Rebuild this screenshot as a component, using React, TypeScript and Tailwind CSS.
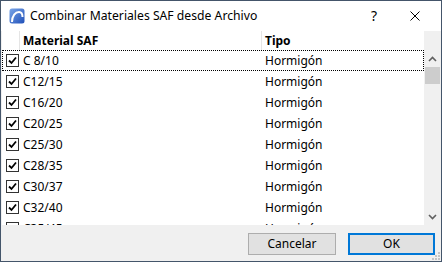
const materiales = ["C 8/10", "C12/15", "C16/20", "C20/25", "C25/30", "C28/35", "C30/37", "C32/40", "C35/45"];

function CheckBox() {
  return (
    <div className="w-[13px] h-[13px] border border-[#333333] bg-white flex items-center justify-center">
      <svg width="9" height="9" viewBox="0 0 9 9">
        <path d="M1 4.5 L3.5 7 L8 1.5" fill="none" stroke="#000" strokeWidth="1.8" />
      </svg>
    </div>
  );
}

function Chevron({ up }: { up?: boolean }) {
  return (
    <svg width="9" height="6" viewBox="0 0 9 6">
      <path d={up ? "M1 5 L4.5 1.5 L8 5" : "M1 1 L4.5 4.5 L8 1"} fill="none" stroke="#606060" strokeWidth="1.6" />
    </svg>
  );
}

export default function App() {
  return (
    <div className="w-[442px] h-[262px] border border-[#44556a] bg-[#f0f0f0] flex flex-col overflow-hidden font-['Segoe_UI','Noto_Sans',sans-serif] text-[12px] text-black">
      {/* title bar */}
      <div className="h-[30px] bg-white flex items-center shrink-0">
        <svg className="ml-[8px]" width="16" height="16" viewBox="0 0 16 16">
          <defs>
            <linearGradient id="ic" x1="0" y1="0" x2="1" y2="1">
              <stop offset="0" stopColor="#7aa6e8" />
              <stop offset="1" stopColor="#1f4fb8" />
            </linearGradient>
          </defs>
          <rect x="0.5" y="0.5" width="15" height="15" rx="2.5" fill="url(#ic)" />
          <path d="M3 14 C3 7.5 6.5 4 10 4 C12.5 4 13.5 6 13.5 9" fill="none" stroke="#fff" strokeWidth="2" />
        </svg>
        <span className="ml-[5px] text-[12.2px]">Combinar Materiales SAF desde Archivo</span>
        <span className="ml-auto mr-[12px] text-[14px] leading-none">?</span>
        <div className="w-[52px] h-full flex items-center justify-center">
          <svg width="10" height="10" viewBox="0 0 10 10">
            <path d="M0.5 0.5 L9.5 9.5 M9.5 0.5 L0.5 9.5" stroke="#000" strokeWidth="1" />
          </svg>
        </div>
      </div>

      {/* list */}
      <div className="h-[194px] flex pl-[1px] shrink-0">
        <div className="flex-1 bg-white overflow-hidden">
          <div className="h-[19px] flex items-center font-bold">
            <div className="w-[18px] h-full border-r border-[#e5e5e5]" />
            <div className="w-[242px] h-full pl-[3px] flex items-center border-r border-[#e5e5e5]">Material SAF</div>
            <div className="pl-[3px]">Tipo</div>
          </div>
          {materiales.map((m, i) => (
            <div
              key={m}
              className={`h-[21px] flex items-center ${i === 0 ? "outline-1 outline-dotted outline-black -outline-offset-1" : ""}`}
            >
              <div className="w-[18px] flex pl-[4px]">
                <CheckBox />
              </div>
              <div className="w-[242px] pl-[3px]">{m}</div>
              <div className="pl-[3px]">Hormigón</div>
            </div>
          ))}
        </div>
        <div className="w-[17px] flex flex-col bg-[#f0f0f0]">
          <div className="h-[19px]" />
          <div className="h-[17px] flex items-center justify-center">
            <Chevron up />
          </div>
          <div className="h-[17px] mx-[1px] bg-[#cdcdcd]" />
          <div className="flex-1" />
          <div className="h-[17px] flex items-center justify-center">
            <Chevron />
          </div>
        </div>
      </div>

      {/* footer */}
      <div className="flex-1 relative flex justify-end items-start pt-[8px] pr-[6px] gap-[12px]">
        <button className="w-[88px] h-[22px] bg-[#e1e1e1] border border-[#adadad] text-[12px] leading-none">Cancelar</button>
        <button className="w-[87px] h-[22px] bg-[#e1e1e1] border-2 border-[#0078d7] text-[12px] leading-none">OK</button>
        <svg className="absolute right-[1px] bottom-[1px]" width="8" height="8" viewBox="0 0 8 8">
          <rect x="6" y="0" width="2" height="2" fill="#c4c4c4" />
          <rect x="3" y="3" width="2" height="2" fill="#c4c4c4" />
          <rect x="6" y="3" width="2" height="2" fill="#c4c4c4" />
          <rect x="0" y="6" width="2" height="2" fill="#c4c4c4" />
          <rect x="3" y="6" width="2" height="2" fill="#c4c4c4" />
          <rect x="6" y="6" width="2" height="2" fill="#c4c4c4" />
        </svg>
      </div>
    </div>
  );
}
